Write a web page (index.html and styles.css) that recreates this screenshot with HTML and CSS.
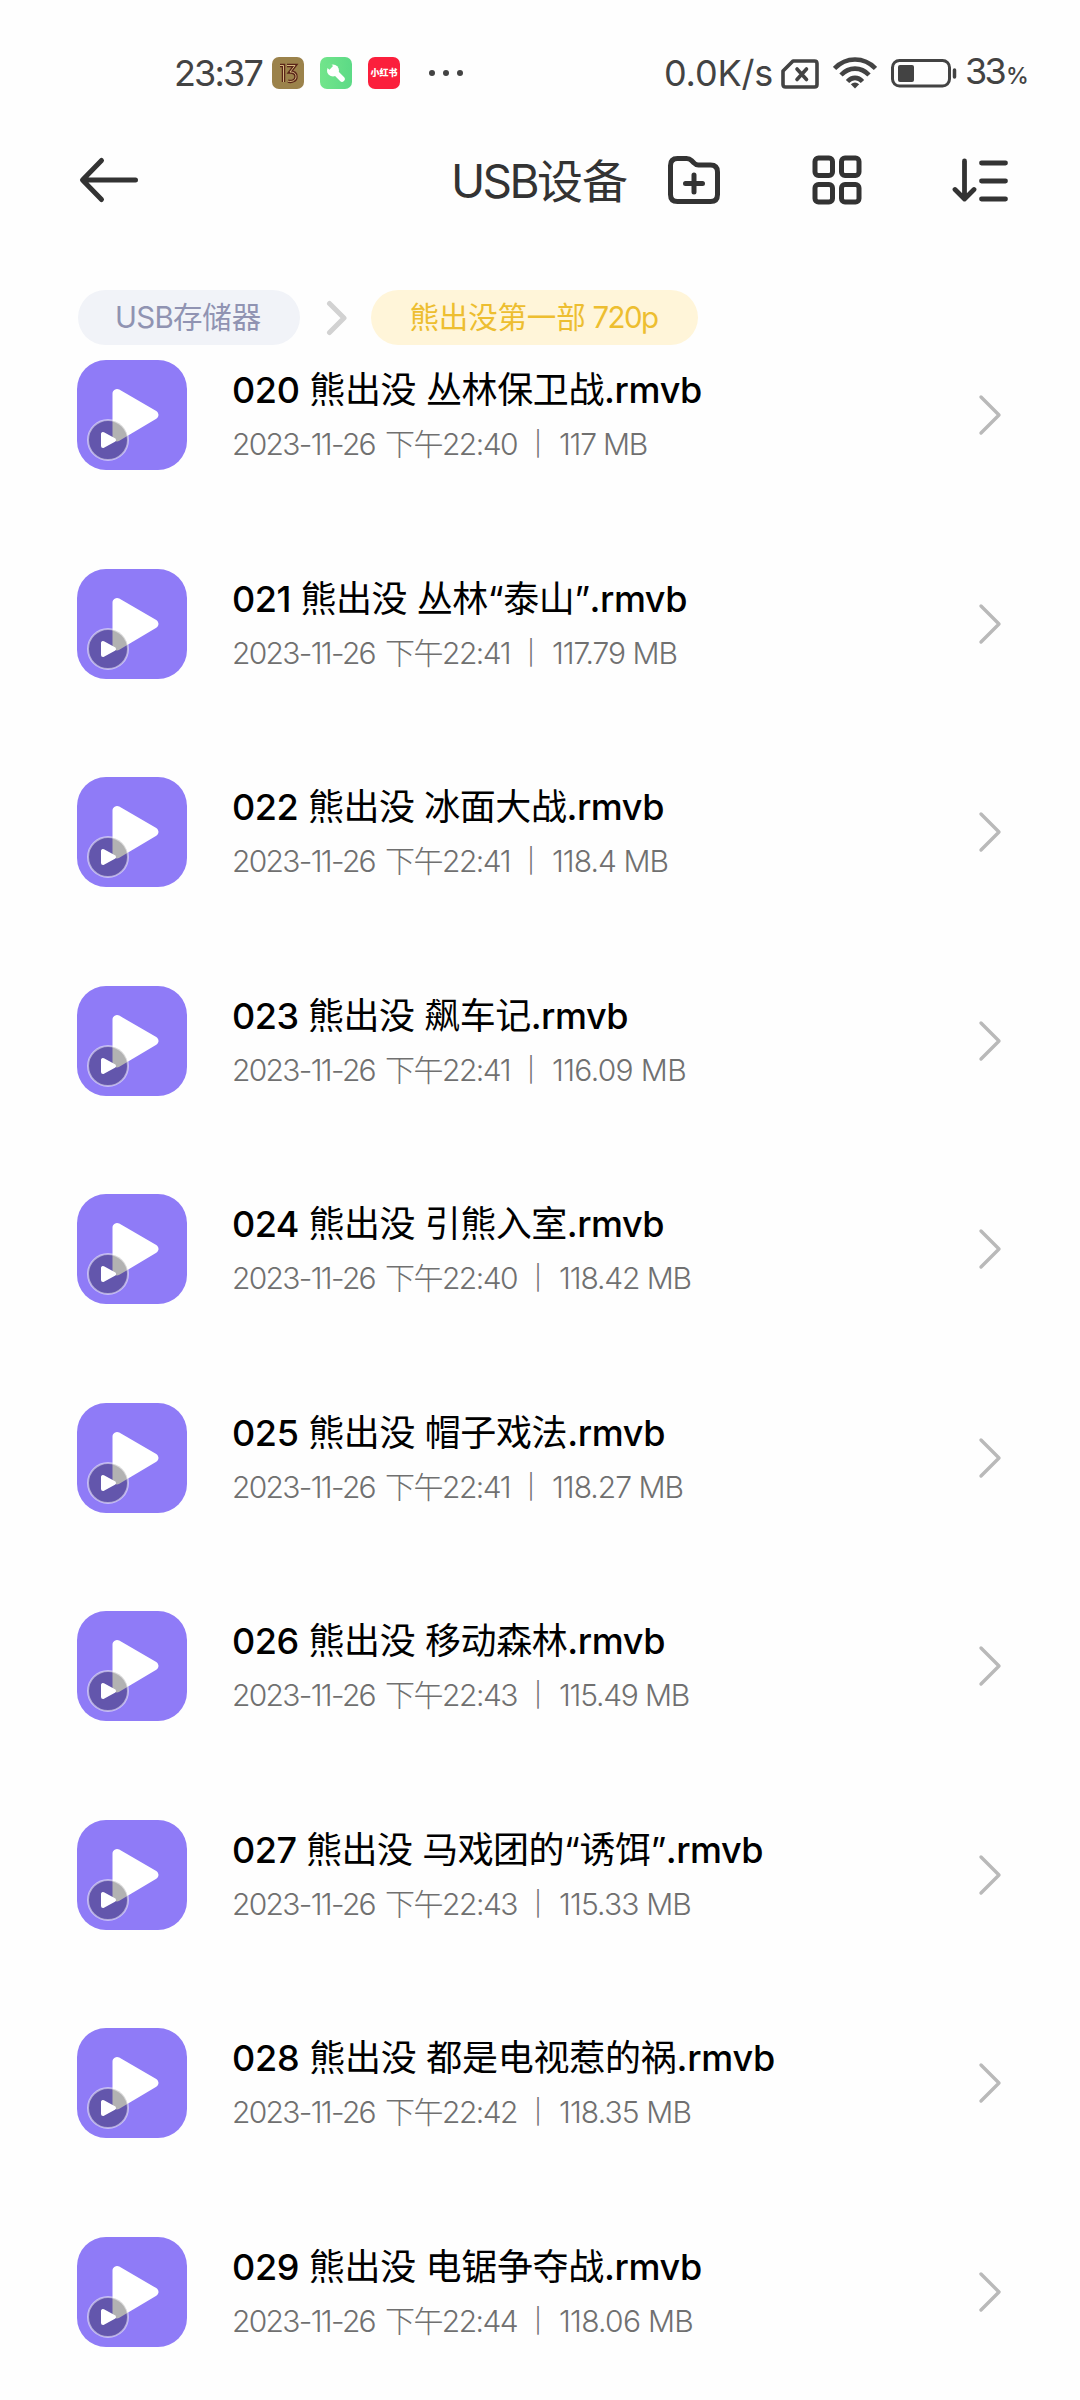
FILE: index.html
```html
<!DOCTYPE html>
<html lang="zh-CN">
<head>
<meta charset="utf-8">
<title>USB设备</title>
<link rel="stylesheet" href="styles.css">
</head>
<body>
<div class="status">
  <span class="clock" data-w="88">23:37</span>
  <svg class="app" viewBox="0 0 32 32"><rect width="32" height="32" rx="7" fill="#9b824b"/><g fill="none" stroke="#5a2418" stroke-width="3.4"><path d="M8 8.500h3.500V25M15 8.500h8l-5 6.500c4.500 0 6 2 6 4.700 0 3.500-3.500 5.500-8 4.500"/></g><g fill="none" stroke="#e2c98a" stroke-width=".9"><path d="M8 8.500h3.500V25M15 8.500h8l-5 6.500c4.500 0 6 2 6 4.700 0 3.500-3.500 5.500-8 4.500"/></g></svg>
  <svg class="app" viewBox="0 0 32 32"><defs><linearGradient id="g" x1="0" x2="1"><stop offset="0" stop-color="#72e58b"/><stop offset="1" stop-color="#5cda86"/></linearGradient></defs><rect width="32" height="32" rx="7" fill="url(#g)"/><path d="M12.500 12.500 22 22" stroke="#fff" stroke-width="5.500" stroke-linecap="round"/><circle cx="13" cy="13.500" r="6" fill="#fff"/><path d="M5.500 9.500 9.500 5.500 13 9 9.500 12.800z" fill="#6fe38b"/></svg>
  <span class="app red">小红书</span>
  <span class="dots"><i></i><i></i><i></i></span>
  <span class="speed" data-w="109">0.0K/s</span>
  <svg class="sim" viewBox="0 0 38 30" fill="none" stroke="#434343" stroke-width="3.600" stroke-linejoin="round"><path d="M12 2h21.500q2.500 0 2.500 2.500v21q0 2.500-2.500 2.500h-29Q2 28 2 25.500V12z"/><path d="m16 10 9.500 10.500M25.500 10 16 20.500" stroke-linecap="round"/></svg>
  <svg class="wifi" viewBox="0 0 44 32" fill="none" stroke="#434343" stroke-width="4.600"><path d="M1.500 11.500C13-.5 31-.5 42.500 11.500M8 18c8-8.500 20-8.500 28 0M14.500 24.500c4.500-4.800 10.500-4.800 15 0"/><path d="M17.800 27.300q4.200-3.600 8.400 0L22 31.500z" fill="#434343" stroke="none"/></svg>
  <svg class="battery" viewBox="0 0 66 29"><rect x="1.500" y="1.500" width="57" height="25.500" rx="7" fill="none" stroke="#434343" stroke-width="3"/><rect x="7" y="6" width="16" height="17" rx="2" fill="#434343"/><path d="M63.500 11v7" stroke="#434343" stroke-width="3.500" stroke-linecap="round"/></svg>
  <span class="pct"><b data-w="39">33</b><small data-w="19">%</small></span>
</div>

<header class="bar">
  <svg class="back" viewBox="0 0 60 48" fill="none" stroke="#333" stroke-width="5" stroke-linecap="round" stroke-linejoin="round"><path d="M22.500 4.500 3.500 24l19 19.500M4 24h52.500"/></svg>
  <h1><span data-w="86">USB</span><span data-w="90">设备</span></h1>
  <svg class="folder" viewBox="0 0 52 48" fill="none" stroke="#333" stroke-width="5" stroke-linecap="round" stroke-linejoin="round"><path d="M2.500 9.500q0-7 7-7h9q3 0 5 2l2.500 2.500q1.700 2 4.500 2h12q7 0 7 7v22.500q0 7-7 7h-33q-7 0-7-7z"/><path d="M17.500 27.500h17M26 19v17"/></svg>
  <svg class="grid" viewBox="0 0 50 50" fill="none" stroke="#333" stroke-width="5"><rect x="3" y="3" width="17.500" height="17.500" rx="3.500"/><rect x="29.500" y="3" width="17.500" height="17.500" rx="3.500"/><rect x="3" y="29.500" width="17.500" height="17.500" rx="3.500"/><rect x="29.500" y="29.500" width="17.500" height="17.500" rx="3.500"/></svg>
  <svg class="sort" viewBox="0 0 56 44" fill="none" stroke="#333" stroke-width="4.800" stroke-linecap="round" stroke-linejoin="round"><path d="M12.500 3v38M3 31.500l9.500 9.500 9.500-9.500M29.500 5h24M29.500 23h24M29.500 41h24"/></svg>
</header>

<nav class="crumbs">
  <span class="chip"><span data-w="58">USB</span><span data-w="88">存储器</span></span>
  <svg class="sep" viewBox="0 0 22 36" fill="none" stroke="#d2d2d2" stroke-width="5" stroke-linecap="round" stroke-linejoin="round"><path d="m3.500 3.500 14.500 14.500-14.500 14.500"/></svg>
  <span class="chip on"><span data-w="176">熊出没第一部</span><span class="ptxt" data-w="65">720p</span></span>
</nav>

<ul class="list" id="list"></ul>

<template id="row">
  <li class="row">
    <svg class="icon" viewBox="0 0 110 110"><rect width="110" height="110" rx="29" fill="#8f7bf7"/><path d="M40 33.500v43.500L77 55z" fill="#fff" stroke="#fff" stroke-width="9" stroke-linejoin="round"/><circle cx="31" cy="80" r="20" fill="#000" fill-opacity=".3" stroke="#fff" stroke-opacity=".5" stroke-width="2"/><path d="M26 74v12l11-6z" fill="#fff" stroke="#fff" stroke-width="4" stroke-linejoin="round"/></svg>
    <div class="text"><div class="name"></div><div class="meta"></div></div>
    <svg class="go" viewBox="0 0 24 42" fill="none" stroke="#b9b9b9" stroke-width="3.400" stroke-linecap="round" stroke-linejoin="round"><path d="m3 3 18 18L3 39"/></svg>
  </li>
</template>
<script src="app.js"></script>
</body>
</html>
```
FILE: styles.css
```css
* { box-sizing: border-box; }
body { margin: 0; width: 1080px; height: 2400px; overflow: hidden; background: #fefefe; font-family: Inter, "Noto Sans CJK SC", sans-serif; color: #000; }
svg { display: block; flex: none; }
[data-w] { display: inline-block; white-space: nowrap; }
.status { display: flex; align-items: center; height: 144px; padding: 2px 0 0 174px; color: #434343; font-size: 36px; line-height: 44px; }
.app { width: 32px; height: 32px; margin: 0 0 0 10px; flex: none; }
.app + .app { margin-left: 16px; }
.red { border-radius: 7px; background: #fb1f3c; color: #fff; font-size: 9px; font-weight: 900; line-height: 31px; text-align: center; }
.dots { display: flex; gap: 8px; margin-left: 29px; width: 36px; }
.dots i { width: 6px; height: 6px; border-radius: 50%; background: #434343; }
.speed { margin-left: 199px; }
.sim { width: 38px; height: 30px; margin: 1px 0 0 8px; }
.wifi { width: 44px; height: 32px; margin: 0 0 0 14px; }
.battery { width: 66px; height: 29px; margin-left: 14px; }
.pct { display: flex; align-items: baseline; margin-left: 8px; }
.pct b { font-weight: 400; margin-right: 2px; }
.pct small { font-size: 23px; font-weight: 500; }
.bar { display: flex; align-items: center; height: 72px; padding-left: 79px; color: #333; }
.back { width: 60px; height: 48px; }
.bar h1 { display: flex; margin: 0 0 0 312px; width: 177px; font-size: 46px; font-weight: 400; line-height: 64px; padding-top: 2px; }
.folder { width: 52px; height: 48px; margin-left: 40px; }
.grid { width: 50px; height: 50px; margin-left: 92px; }
.sort { width: 56px; height: 44px; margin-left: 90px; }
.crumbs { display: flex; align-items: center; height: 55px; margin: 74px 0 15px 78px; font-size: 29.500px; }
.chip { display: flex; align-items: center; justify-content: center; width: 222px; height: 55px; padding-right: 2px; border-radius: 28px; background: #f1f3f8; color: #9093b2; line-height: 55px; }
.chip.on { width: 327px; background: #fff5d9; color: #edbe30; gap: 7px; }
.sep { width: 22px; height: 36px; margin: 0 23px 0 26px; }
.list { margin: 0; padding: 0; list-style: none; }
.row { display: flex; align-items: center; height: 110px; margin-bottom: 98.500px; padding-left: 77px; }
.icon { width: 110px; height: 110px; }
.text { width: 746px; margin-left: 45px; padding-top: 4px; }
.name { display: flex; align-items: center; height: 54px; font-size: 36px; line-height: 54px; }
.num, .ext { font-weight: 450; }
.meta { display: flex; align-items: center; height: 54px; color: #707070; font-size: 30px; font-weight: 300; line-height: 54px; }
.time { margin-left: 10px; }
.pipe { width: 42px; text-align: center; font-size: 24px; }
.go { width: 24px; height: 42px; }
```
FILE: app.js
```js
// number, show, episode, time, size, width of the title, width of the details
const files = [
  ['020', '熊出没', '丛林保卫战', '22:40', '117 MB', 470, 415],
  ['021', '熊出没', '丛林“泰山”', '22:41', '117.79 MB', 455, 445],
  ['022', '熊出没', '冰面大战', '22:41', '118.4 MB', 432, 436],
  ['023', '熊出没', '飙车记', '22:41', '116.09 MB', 396, 454],
  ['024', '熊出没', '引熊入室', '22:40', '118.42 MB', 432, 459],
  ['025', '熊出没', '帽子戏法', '22:41', '118.27 MB', 433, 451],
  ['026', '熊出没', '移动森林', '22:43', '115.49 MB', 433, 457],
  ['027', '熊出没', '马戏团的“诱饵”', '22:43', '115.33 MB', 531, 459],
  ['028', '熊出没', '都是电视惹的祸', '22:42', '118.35 MB', 543, 459],
  ['029', '熊出没', '电锯争夺战', '22:44', '118.06 MB', 470, 461],
];
const list = document.getElementById('list');
const tpl = document.getElementById('row');
for (const [no, show, title, time, size, nameW, metaW] of files) {
  const row = tpl.content.cloneNode(true);
  const timeW = time.endsWith('1') ? 125 : 132;
  row.querySelector('.name').innerHTML =
    `<span data-w="${nameW}"><span class="num">${no}</span> ${show} ${title}<span class="ext">.rmvb</span></span>`;
  row.querySelector('.meta').innerHTML =
    `<span data-w="143">2023-11-26</span><span class="time" data-w="${timeW}">下午${time}</span>` +
    `<span class="pipe">|</span><span data-w="${metaW - 195 - timeW}">${size}</span>`;
  list.appendChild(row);
}
// Track each run of text to its own width
document.fonts.ready.then(() => {
  for (const el of document.querySelectorAll('[data-w]')) {
    const spacing = (el.dataset.w - el.getBoundingClientRect().width) / el.textContent.length;
    el.style.letterSpacing = spacing.toFixed(3) + 'px';
  }
});
```
